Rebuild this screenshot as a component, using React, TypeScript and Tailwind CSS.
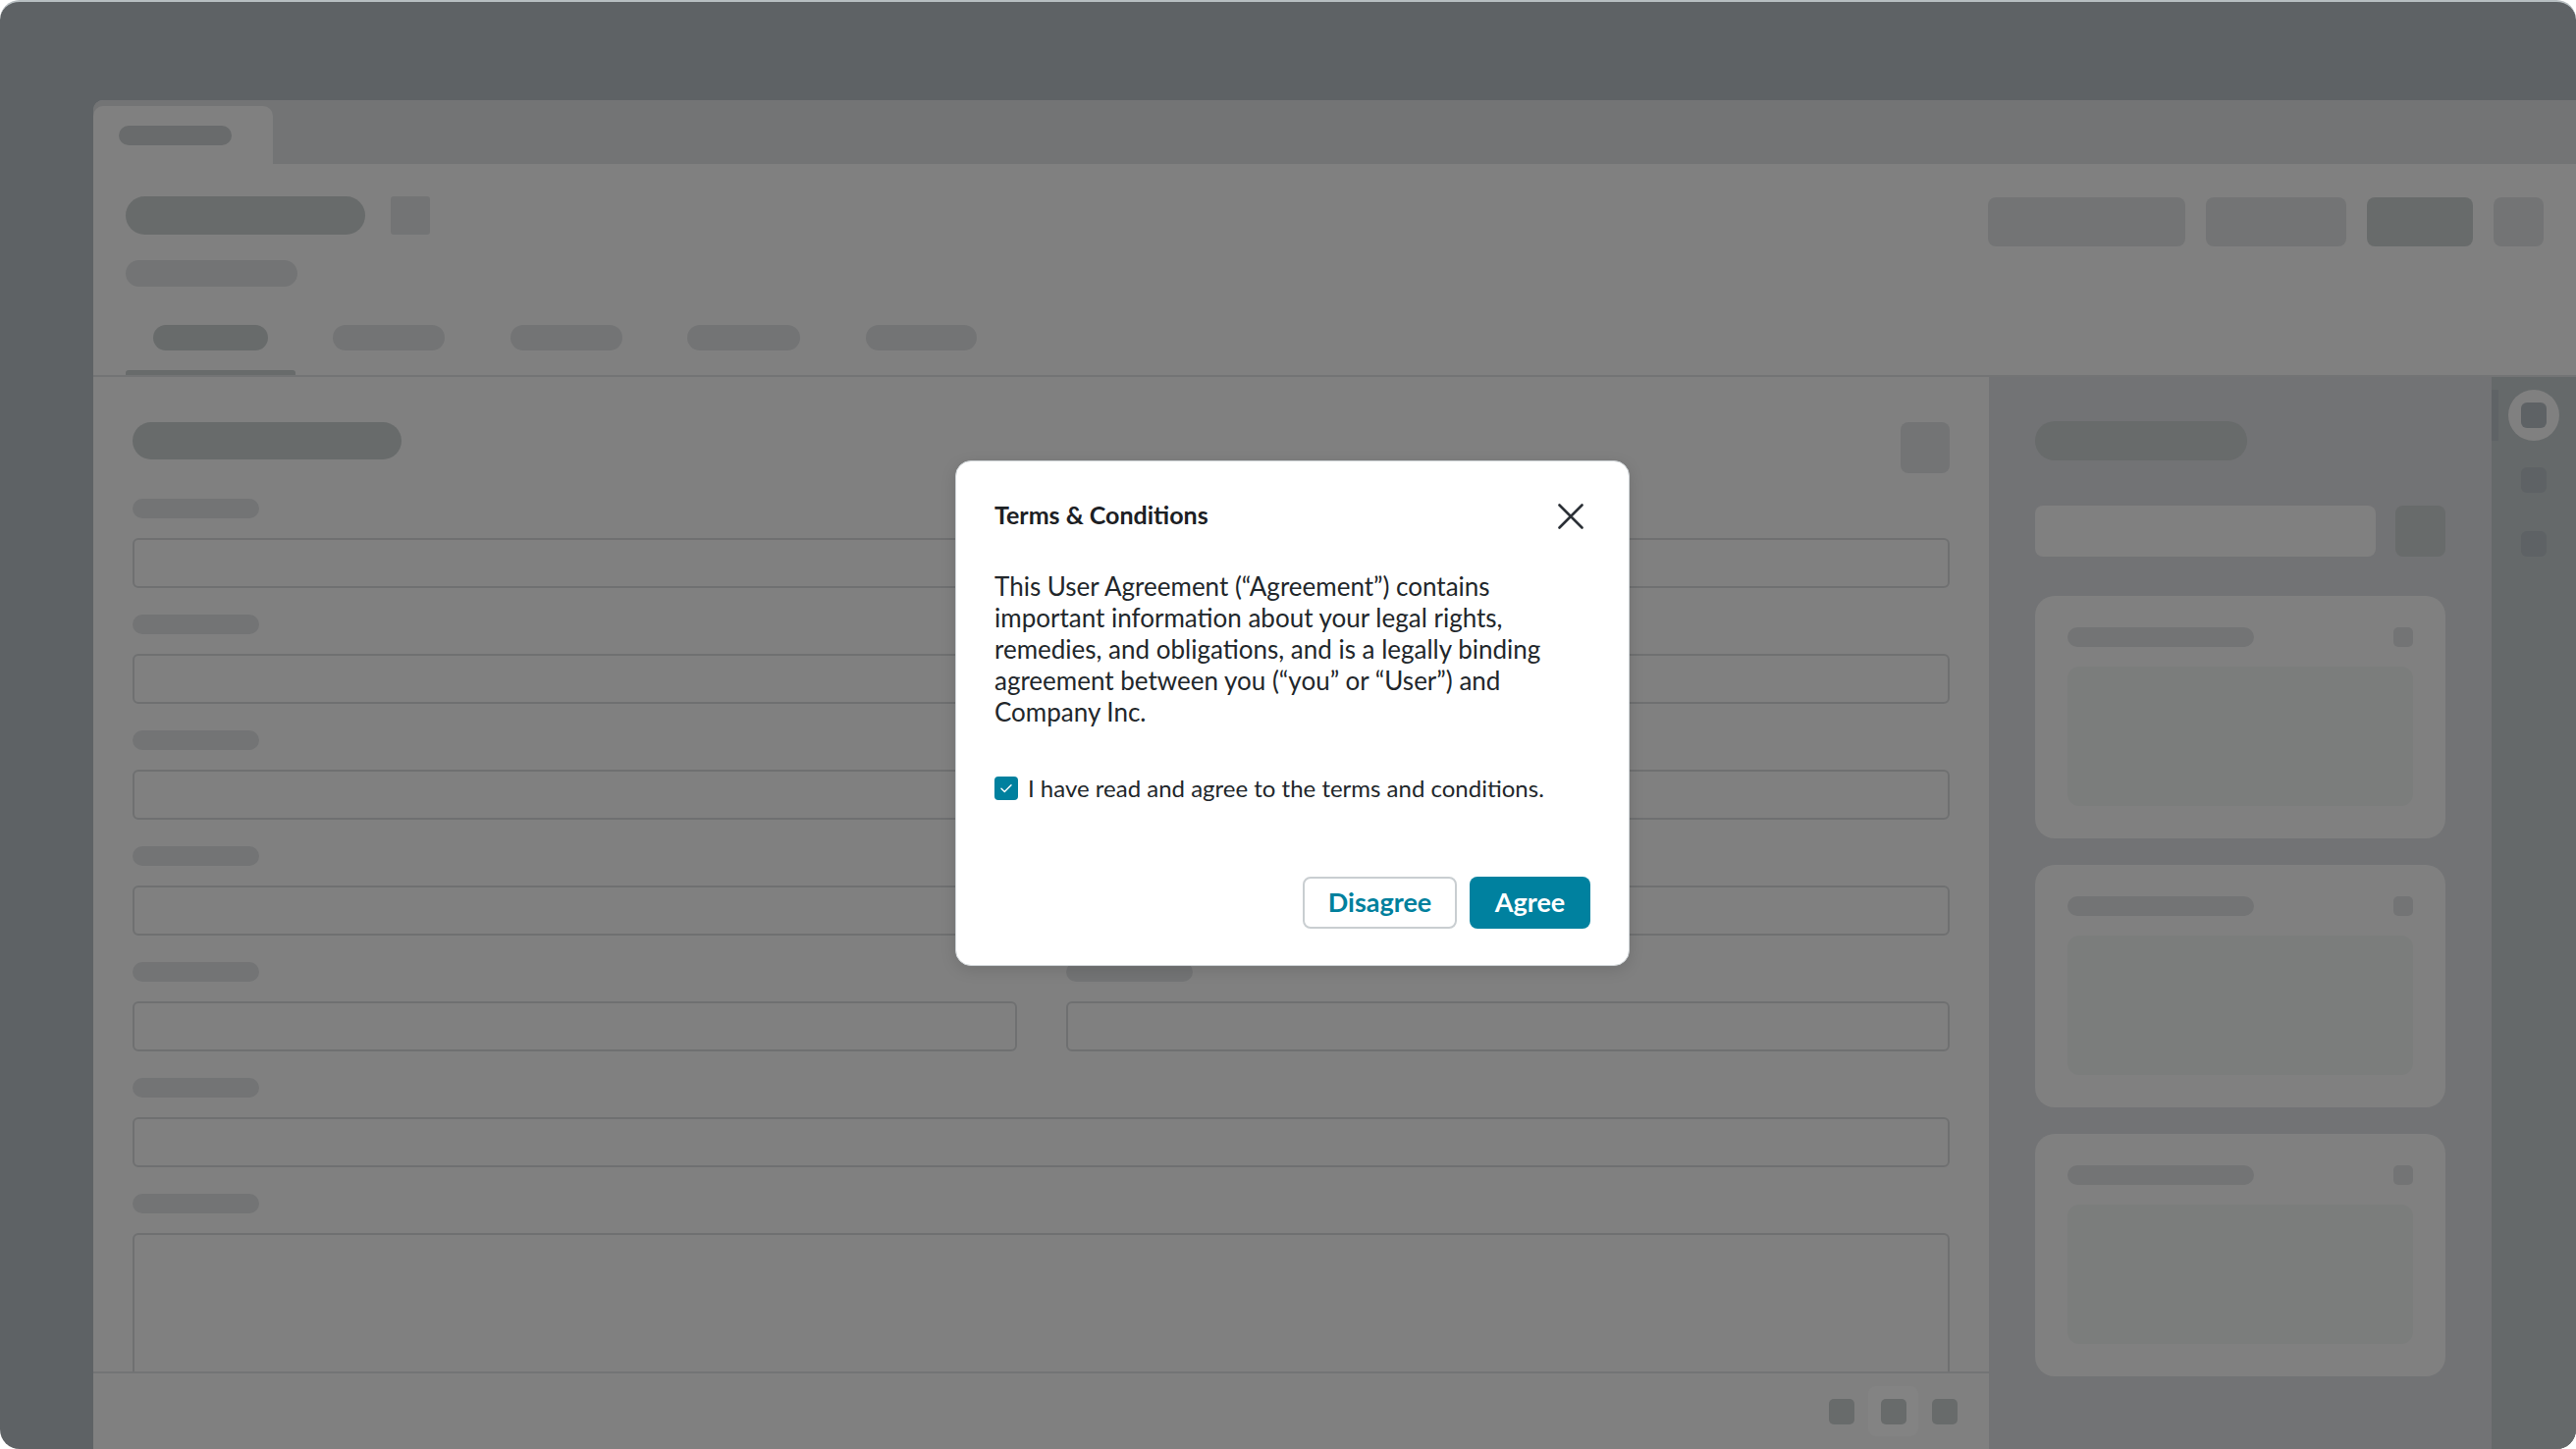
import React from 'react';

const tabPills = [117, 114, 114, 115, 113];
const fields = ['full', 'full', 'full', 'full', 'split', 'full'];

const Field = ({ className = '' }: { className?: string }) => (
  <div className={className}>
    <div className="w-[129px] h-[20px] rounded-full bg-[#737475]" />
    <div className="mt-[20px] h-[51px] rounded-[6px] border-2 border-[#6f7071]" />
  </div>
);

const SideCard = () => (
  <div className="h-[247px] rounded-[20px] bg-[#808080] px-[33px] pt-[32px]">
    <div className="flex items-center justify-between">
      <div className="w-[190px] h-[20px] rounded-full bg-[#737475]" />
      <div className="w-[20px] h-[20px] rounded-[5px] bg-[#737475]" />
    </div>
    <div className="mt-[20px] h-[142px] rounded-[12px] bg-[#7b7d7c]" />
  </div>
);

const TermsModal = () => (
  <div
    className="absolute left-[973px] top-[469px] w-[687px] rounded-[16px] border border-[#cdd2d5] bg-white px-[39px] pt-[38px] pb-[37px] shadow-[0_4px_16px_rgba(0,0,0,0.12)]"
    style={{ fontFamily: 'Lato, "Liberation Sans", sans-serif' }}
  >
    <div className="flex items-center justify-between">
      <h2 className="text-[25px] leading-[32px] font-bold text-[#1c2024]">Terms &amp; Conditions</h2>
      <button type="button" aria-label="Close" className="mr-[7px] mt-[4px] text-[#2b3036]">
        <svg width="26" height="26" viewBox="0 0 26 26" fill="none" stroke="currentColor" strokeWidth="2.6" strokeLinecap="round">
          <path d="M1.5 1.5L24.5 24.5M24.5 1.5L1.5 24.5" />
        </svg>
      </button>
    </div>
    <p className="mt-[41px] text-[26px] leading-[32px] text-[#22272b]">
      This User Agreement (“Agreement”) contains important information about your legal rights, remedies, and obligations, and is a legally binding agreement between you (“you” or “User”) and Company Inc.
    </p>
    <label className="mt-[46px] flex items-center gap-[10px] text-[24px] leading-[32px] text-[#22272b]">
      <span className="flex w-[24px] h-[24px] items-center justify-center rounded-[4px] bg-[#00809e]">
        <svg width="16" height="16" viewBox="0 0 16 16" fill="none" stroke="white" strokeWidth="1.4" strokeLinecap="round" strokeLinejoin="round">
          <path d="M3 8.3L6.3 11.5L13 4.8" />
        </svg>
      </span>
      I have read and agree to the terms and conditions.
    </label>
    <div className="mt-[74px] flex justify-end gap-[13px]">
      <button type="button" className="w-[157px] h-[53px] rounded-[8px] border-2 border-[#c9ced1] bg-white text-[27px] font-bold text-[#00809d]">
        Disagree
      </button>
      <button type="button" className="w-[123px] h-[53px] rounded-[8px] bg-[#00819f] text-[27px] font-bold text-white">
        Agree
      </button>
    </div>
  </div>
);

export default function App() {
  return (
    <div className="relative w-[2624px] h-[1476px] bg-white">
      <div className="flex h-full w-full overflow-hidden rounded-[20px] border-t-2 border-[#b7bec1] bg-[#5e6265] pl-[95px] pt-[100px]">
        <div className="flex flex-1 flex-col overflow-hidden rounded-tl-[10px] bg-[#808080]">
          {/* window tabs */}
          <div className="flex h-[65px] shrink-0 items-end bg-[#737475]">
            <div className="h-[59px] w-[183px] rounded-t-[10px] bg-[#808080] pl-[26px] pt-[20px]">
              <div className="h-[20px] w-[115px] rounded-full bg-[#696b6c]" />
            </div>
          </div>

          {/* header */}
          <div className="h-[217px] shrink-0 border-b-2 border-[#737475] px-[33px] pt-[33px]">
            <div className="flex h-[39px] items-start justify-between">
              <div className="flex gap-[26px]">
                <div className="h-[39px] w-[244px] rounded-full bg-[#686b6b]" />
                <div className="h-[39px] w-[40px] rounded-[3px] bg-[#737475]" />
              </div>
              <div className="mt-[1px] flex gap-[21px]">
                <div className="h-[50px] w-[201px] rounded-[8px] bg-[#737475]" />
                <div className="h-[50px] w-[143px] rounded-[8px] bg-[#737475]" />
                <div className="h-[50px] w-[108px] rounded-[8px] bg-[#686b6b]" />
                <div className="h-[50px] w-[51px] rounded-[8px] bg-[#737475]" />
              </div>
            </div>
            <div className="mt-[26px] h-[27px] w-[175px] rounded-full bg-[#737475]" />
            <div className="mt-[39px] flex gap-[8px]">
              {tabPills.map((w, i) => (
                <div key={i} className="flex w-[173px] flex-col items-center">
                  <div
                    className={i === 0 ? 'h-[26px] rounded-full bg-[#686b6b]' : 'h-[26px] rounded-full bg-[#737475]'}
                    style={{ width: w }}
                  />
                  <div className={i === 0 ? 'mt-[20px] h-[5px] w-full rounded-t-[3px] bg-[#686b6b]' : 'mt-[20px] h-[5px] w-full'} />
                </div>
              ))}
            </div>
          </div>

          {/* body */}
          <div className="flex min-h-0 flex-1">
            <div className="flex w-[1931px] flex-col">
              <div className="min-h-0 flex-1 overflow-hidden px-[40px] pt-[46px]">
                <div className="flex items-start justify-between">
                  <div className="h-[38px] w-[274px] rounded-full bg-[#686b6b]" />
                  <div className="h-[52px] w-[50px] rounded-[8px] bg-[#737475]" />
                </div>
                <div className="mt-[26px] flex flex-col gap-[27px]">
                  {fields.map((f, i) =>
                    f === 'split' ? (
                      <div key={i} className="grid grid-cols-2 gap-[50px]">
                        <Field />
                        <Field />
                      </div>
                    ) : (
                      <Field key={i} />
                    )
                  )}
                  <div>
                    <div className="h-[20px] w-[129px] rounded-full bg-[#737475]" />
                    <div className="mt-[20px] h-[300px] rounded-[6px] border-2 border-[#6f7071]" />
                  </div>
                </div>
              </div>
              <div className="flex h-[79px] shrink-0 items-center justify-end gap-[14px] border-t-2 border-[#737475] pr-[32px]">
                <div className="h-[26px] w-[26px] rounded-[5px] bg-[#686b6b]" />
                <div className="flex h-[51px] w-[51px] items-center justify-center rounded-[8px] bg-[#838383]">
                  <div className="h-[26px] w-[26px] rounded-[5px] bg-[#686b6b]" />
                </div>
                <div className="h-[26px] w-[26px] rounded-[5px] bg-[#686b6b]" />
              </div>
            </div>

            {/* side panel */}
            <div className="w-[512px] shrink-0 bg-[#727375] px-[47px] pt-[45px]">
              <div className="h-[40px] w-[216px] rounded-full bg-[#686b6b]" />
              <div className="mt-[46px] flex gap-[20px]">
                <div className="h-[52px] w-[348px] rounded-[8px] bg-[#808080]" />
                <div className="h-[52px] w-[51px] rounded-[8px] bg-[#686b6b]" />
              </div>
              <div className="mt-[40px] flex flex-col gap-[27px]">
                <SideCard />
                <SideCard />
                <SideCard />
              </div>
            </div>

            {/* rail */}
            <div className="relative flex flex-1 flex-col bg-[#65696a] pt-[13px]">
              <div className="absolute left-0 top-[13px] h-[52px] w-[7px] bg-[#5f6366]" />
              <div className="ml-[17px] flex h-[52px] w-[52px] items-center justify-center rounded-full bg-[#808080]">
                <div className="h-[26px] w-[26px] rounded-[6px] bg-[#5e6265]" />
              </div>
              <div className="ml-[30px] mt-[27px] h-[26px] w-[26px] rounded-[6px] bg-[#5e6265]" />
              <div className="ml-[30px] mt-[39px] h-[26px] w-[26px] rounded-[6px] bg-[#5e6265]" />
            </div>
          </div>
        </div>
      </div>
      <TermsModal />
    </div>
  );
}
